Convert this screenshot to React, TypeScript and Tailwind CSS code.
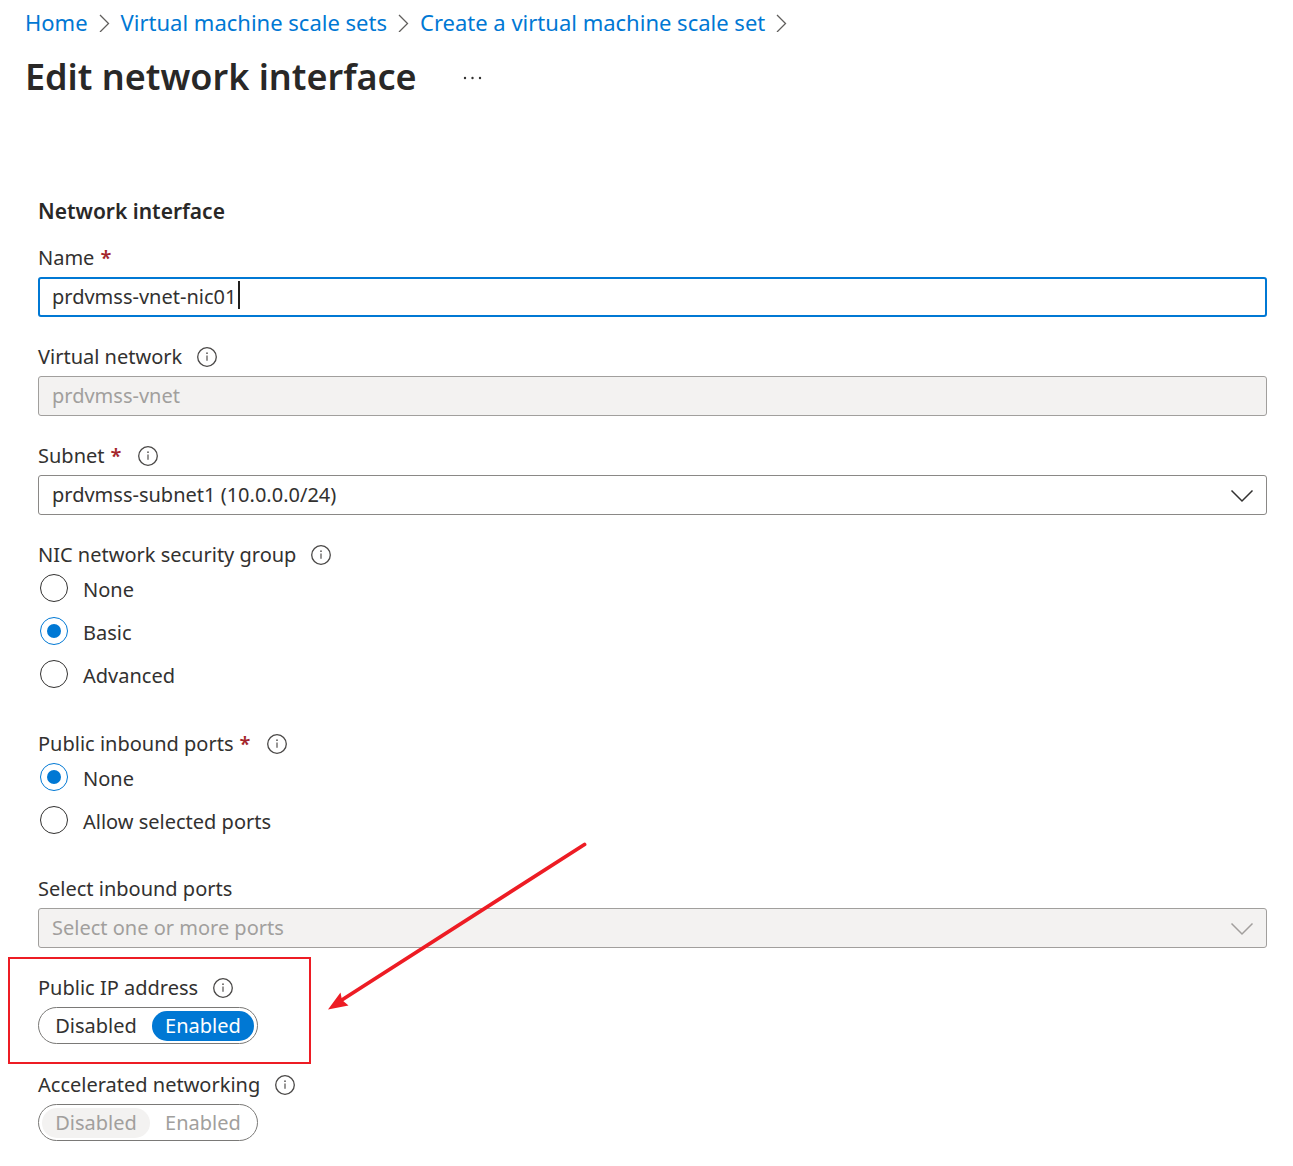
import { Fragment, useState, type ReactNode } from "react";

function InfoIcon() {
  return (
    <svg width="22" height="22" viewBox="0 0 22 22" fill="none" className="shrink-0" aria-hidden="true">
      <circle cx="11" cy="11" r="9.3" stroke="#4a4847" strokeWidth="1.3" />
      <path d="M11 9.4v5.4" stroke="#605e5c" strokeWidth="1.3" />
      <circle cx="11" cy="7.2" r="0.9" fill="#605e5c" />
    </svg>
  );
}

function Chevron({ className }: { className: string }) {
  return (
    <svg width="24" height="14" viewBox="0 0 24 14" fill="none" className={className} aria-hidden="true">
      <path d="M1.5 1.5 12 12 22.5 1.5" stroke="currentColor" strokeWidth="1.5" />
    </svg>
  );
}

type LabelProps = { text: string; required?: boolean; info?: boolean };

function LabelContent({ text, required, info }: LabelProps) {
  return (
    <>
      <span>{text}</span>
      {required && <span className="mr-0.5 ml-1.5 font-semibold text-[#a4262c]">*</span>}
      {info && (
        <span className="ml-3.5">
          <InfoIcon />
        </span>
      )}
    </>
  );
}

function Field({ id, children, ...label }: LabelProps & { id: string; children: ReactNode }) {
  return (
    <div>
      <label htmlFor={id} className="flex h-10 items-center pt-0.5">
        <LabelContent {...label} />
      </label>
      <div className="relative">{children}</div>
    </div>
  );
}

function RadioField({ name, options, initial, ...label }: LabelProps & { name: string; options: string[]; initial: string }) {
  const [value, setValue] = useState(initial);
  return (
    <div role="radiogroup" aria-label={label.text}>
      <div className="flex h-10 items-center pt-0.5">
        <LabelContent {...label} />
      </div>
      <div className="flex flex-col items-start gap-[15px]">
        {options.map((option) => (
          <label key={option} className="flex h-7 items-center gap-[15px] pl-0.5">
            <input
              type="radio"
              name={name}
              checked={value === option}
              onChange={() => setValue(option)}
              className="grid size-7 appearance-none place-items-center rounded-full border border-[#323130] before:size-3.5 before:rounded-full checked:border-[#0078d4] checked:before:bg-[#0078d4]"
            />
            <span className="pt-1">{option}</span>
          </label>
        ))}
      </div>
    </div>
  );
}

function Toggle({ label, initial, disabled }: { label: string; initial: string; disabled?: boolean }) {
  const [value, setValue] = useState(initial);
  return (
    <div role="group" aria-label={label}>
      <div className="flex h-10 items-center pt-0.5">
        <LabelContent text={label} info />
      </div>
      <div className="flex h-[37px] w-[220px] items-center gap-0.5 rounded-full border border-[#7a7977] px-[3px]">
        {["Disabled", "Enabled"].map((option) => {
          const on = value === option;
          const tone = disabled
            ? on
              ? "bg-[#f3f2f1] text-[#a19f9d]"
              : "text-[#a19f9d]"
            : on
              ? "bg-[#0078d4] text-white"
              : "text-[#323130]";
          return (
            <button
              key={option}
              type="button"
              disabled={disabled}
              aria-pressed={on}
              onClick={() => setValue(option)}
              className={`flex h-[30px] flex-auto items-center justify-center rounded-full ${tone}`}
            >
              {option}
            </button>
          );
        })}
      </div>
    </div>
  );
}

function Annotation() {
  return (
    <div className="pointer-events-none" aria-hidden="true">
      <div className="absolute -top-2.5 -left-[30px] h-[107px] w-[303px] border-2 border-[#ed1c24]" />
      <svg width="264" height="172" viewBox="0 0 264 172" className="absolute -top-[127px] left-[287px]">
        <path d="M259.5 4.5 16 160.5" stroke="#ed1c24" strokeWidth="3.8" strokeLinecap="round" />
        <path d="M3 169.5 15.5 152.5 17 160 23.5 165.5Z" fill="#ed1c24" />
      </svg>
    </div>
  );
}

const crumbs = ["Home", "Virtual machine scale sets", "Create a virtual machine scale set"];

export default function App() {
  const [name, setName] = useState("prdvmss-vnet-nic01");
  return (
    <main className="min-h-screen overflow-x-hidden bg-white pb-6 font-['Noto_Sans',sans-serif] text-[20px] leading-7 text-[#323130]">
      <header className="px-[25px] pt-2">
        <nav aria-label="Breadcrumb" className="flex items-center text-[22px] text-[#0078d4]">
          {crumbs.map((crumb) => (
            <Fragment key={crumb}>
              <a href="#" className="whitespace-nowrap">{crumb}</a>
              <svg width="11" height="20" viewBox="0 0 11 20" fill="none" className="mx-[11px] shrink-0 text-[#605e5c]" aria-hidden="true">
                <path d="M1 3 9.5 11.5 1 20" stroke="currentColor" strokeWidth="1.3" />
              </svg>
            </Fragment>
          ))}
        </nav>
        <div className="mt-4 flex items-center gap-11">
          <h1 className="text-[36px] leading-[50px] font-semibold text-[#292827]">Edit network interface</h1>
          <button type="button" aria-label="More options" className="flex h-6 items-center">
            <svg width="24" height="6" viewBox="0 0 24 6" fill="#323130" aria-hidden="true">
              <circle cx="4" cy="4" r="1.2" />
              <circle cx="11.5" cy="4" r="1.2" />
              <circle cx="19" cy="4" r="1.2" />
            </svg>
          </button>
        </div>
      </header>

      <form className="pt-[95px] pr-[26px] pl-[38px]" onSubmit={(e) => e.preventDefault()}>
        <h2 className="mb-3 text-[21px] font-semibold text-[#292827]">Network interface</h2>
        <div className="flex flex-col gap-[19px]">
          <Field id="nic-name" text="Name" required>
            <input
              id="nic-name"
              type="text"
              value={name}
              onChange={(e) => setName(e.target.value)}
              className="block h-10 w-full rounded-[3px] border-2 border-[#0078d4] px-3 pb-0.5 outline-none"
            />
            <span className="absolute top-1 left-[200px] h-7 w-0.5 bg-[#201f1e]" />
          </Field>
          <Field id="vnet" text="Virtual network" info>
            <input
              id="vnet"
              type="text"
              value="prdvmss-vnet"
              disabled
              className="block h-10 w-full rounded-[3px] border border-[#a19f9d] bg-[#f3f2f1] px-[13px] pb-0.5 text-[#a19f9d]"
            />
          </Field>
          <Field id="subnet" text="Subnet" required info>
            <select id="subnet" className="block h-10 w-full appearance-none rounded-[3px] border border-[#8a8886] bg-white pr-12 pl-[13px]">
              <option>prdvmss-subnet1 (10.0.0.0/24)</option>
            </select>
            <Chevron className="pointer-events-none absolute top-3.5 right-[13px] text-[#323130]" />
          </Field>
          <RadioField name="nsg" text="NIC network security group" info options={["None", "Basic", "Advanced"]} initial="Basic" />
        </div>
        <div className="mt-[35px]">
          <RadioField name="ports" text="Public inbound ports" required info options={["None", "Allow selected ports"]} initial="None" />
        </div>
        <div className="mt-[34px] flex flex-col gap-[19px]">
          <Field id="inbound" text="Select inbound ports">
            <select
              id="inbound"
              disabled
              className="block h-10 w-full appearance-none rounded-[3px] border border-[#a19f9d] bg-[#f3f2f1] pr-12 pl-[13px] text-[#a19f9d] opacity-100"
            >
              <option>Select one or more ports</option>
            </select>
            <Chevron className="pointer-events-none absolute top-3.5 right-[13px] text-[#a19f9d]" />
          </Field>
          <div className="relative pb-px">
            <Toggle label="Public IP address" initial="Enabled" />
            <Annotation />
          </div>
          <Toggle label="Accelerated networking" initial="Disabled" disabled />
        </div>
      </form>
    </main>
  );
}
